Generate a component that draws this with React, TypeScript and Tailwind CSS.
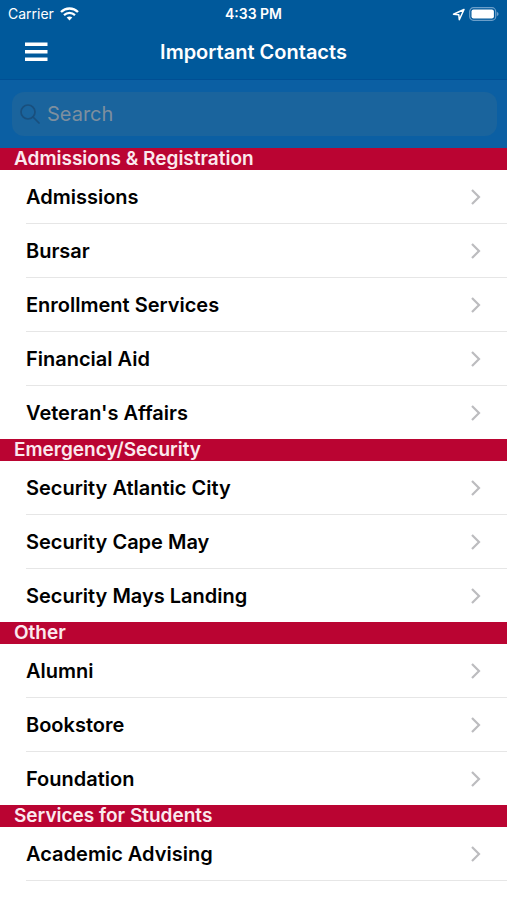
import React from "react";

type Section = { title: string; contacts: string[] };

const sections: Section[] = [
  {
    title: "Admissions & Registration",
    contacts: ["Admissions", "Bursar", "Enrollment Services", "Financial Aid", "Veteran's Affairs"],
  },
  {
    title: "Emergency/Security",
    contacts: ["Security Atlantic City", "Security Cape May", "Security Mays Landing"],
  },
  { title: "Other", contacts: ["Alumni", "Bookstore", "Foundation"] },
  { title: "Services for Students", contacts: ["Academic Advising", "Athletics"] },
];

function WifiIcon() {
  return (
    <svg width="19" height="14" viewBox="0 0 19 14" fill="none" stroke="#fff" aria-hidden="true">
      <path d="M1 5C5.8 .4 13.2 .4 18 5" strokeWidth="2.4" />
      <path d="M4 8.1C7.2 5.1 11.8 5.1 15 8.1" strokeWidth="2.2" />
      <path d="M6.7 10.5C8.3 9 10.700 9 12.300 10.500L9.500 13.400Z" fill="#fff" stroke="none" />
    </svg>
  );
}

function StatusBar() {
  return (
    <div className="grid h-7 grid-cols-3 items-center px-2 text-white">
      <div className="flex items-center gap-1.5 text-sm">
        <span>Carrier</span>
        <WifiIcon />
      </div>
      <span className="text-center text-sm font-semibold">4:33 PM</span>
      <div className="flex items-center justify-end gap-1">
        <svg width="13" height="13" viewBox="0 0 13 13" fill="none" stroke="#fff" strokeWidth="1.5" strokeLinejoin="round" aria-hidden="true">
          <path d="M12 1.500L1.500 6.300L6.800 6.800L7.300 11.800Z" />
        </svg>
        <svg width="30" height="14" viewBox="0 0 30 14" aria-hidden="true">
          <rect x=".7" y=".7" width="26" height="12.6" rx="3.8" fill="none" stroke="#6b9fca" strokeWidth="1.2" />
          <rect x="2.5" y="2.5" width="22.400" height="9" rx="2" fill="#fff" />
          <path d="M27.800 4.800Q29.600 5.500 29.600 7T27.800 9.200Z" fill="#6b9fca" />
        </svg>
      </div>
    </div>
  );
}

function NavBar() {
  return (
    <div className="grid grid-cols-[1fr_auto_1fr] items-center border-b border-[#004f94] px-6 pt-1.5 pb-[9px]">
      <button type="button" aria-label="Menu" className="w-6 text-white">
        <svg width="24" height="20" viewBox="0 0 24 20" fill="currentColor" aria-hidden="true">
          <path d="M1 .5h22.500v3.500H1zM1 8h22.500v3.500H1zM1 15.500h22.500V19H1z" />
        </svg>
      </button>
      <h1 className="py-2 text-xl leading-5 font-semibold text-white">Important Contacts</h1>
    </div>
  );
}

function SearchBar() {
  return (
    <div className="bg-[#0b5fa3] py-3 pr-2.5 pl-3">
      <label className="flex h-11 items-center gap-[7px] rounded-xl bg-[#1a649d] px-2">
        <svg width="20" height="20" viewBox="0 0 20 20" fill="none" stroke="#194f7d" strokeWidth="1.7" strokeLinecap="round" aria-hidden="true">
          <circle cx="8" cy="8" r="7" />
          <path d="M13 13l6 6" />
        </svg>
        <input
          type="search"
          aria-label="Search"
          placeholder="Search"
          className="min-w-0 flex-1 bg-transparent text-xl outline-none placeholder:text-[#7d8f9f]"
        />
      </label>
    </div>
  );
}

function ContactRow({ name }: { name: string }) {
  return (
    <li className="group pl-[26px]">
      <a href="#" className="flex items-center justify-between border-b border-[#e6e6e6] py-3 pr-[26px] group-last:border-b-0">
        <span className="pt-0.5 text-xl leading-[27px] font-semibold text-black">{name}</span>
        <svg width="11" height="16" viewBox="0 0 11 16" fill="none" stroke="#bcbcbf" strokeWidth="2.2" aria-hidden="true">
          <path d="M2 1l7 7-7 7" />
        </svg>
      </a>
    </li>
  );
}

export default function App() {
  return (
    <div className="h-screen overflow-hidden bg-white font-['Inter','Liberation_Sans',sans-serif]">
      <header className="bg-[#00599b]">
        <StatusBar />
        <NavBar />
        <SearchBar />
      </header>
      <main>
        {sections.map((section) => (
          <section key={section.title}>
            <h2 className="bg-[#ba0432] px-3.5 text-[19px] leading-[22px] font-semibold text-[#fbe9ee]">{section.title}</h2>
            <ul>
              {section.contacts.map((name) => (
                <ContactRow key={name} name={name} />
              ))}
            </ul>
          </section>
        ))}
      </main>
    </div>
  );
}
